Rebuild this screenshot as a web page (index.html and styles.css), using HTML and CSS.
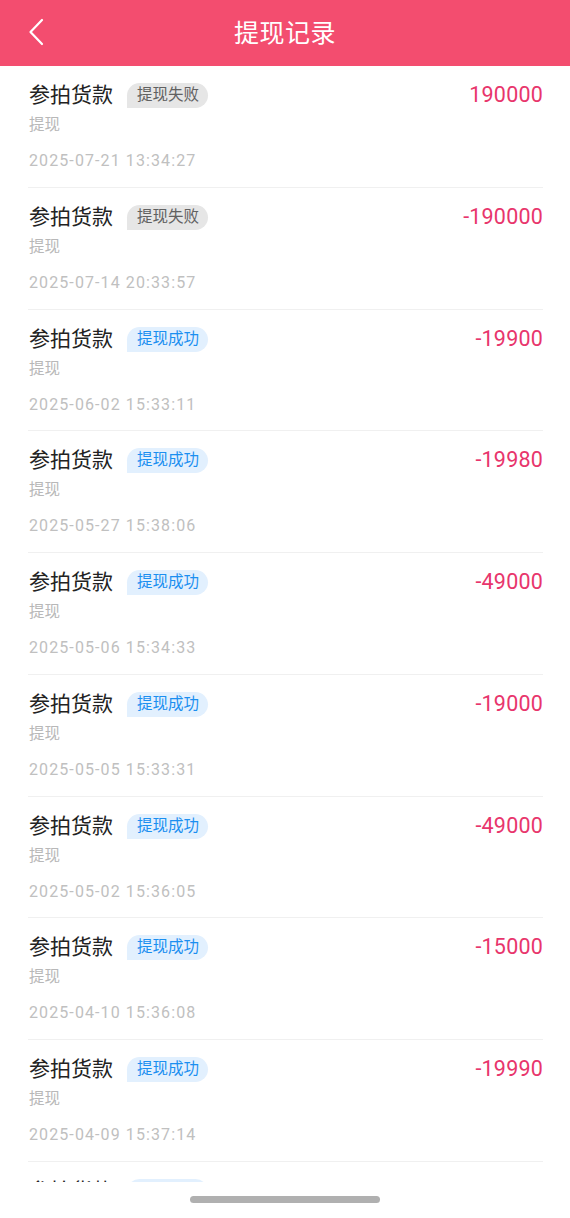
FILE: index.html
```html
<!DOCTYPE html>
<html lang="zh">
<head>
<meta charset="utf-8">
<title>提现记录</title>
<link rel="stylesheet" href="styles.css">
</head>
<body>
<div class="app">
  <header class="topbar">
    <svg class="back" viewBox="0 0 16 28" width="16" height="28"><path d="M14 2 L2.5 14 L14 26" fill="none" stroke="#fff" stroke-width="2.2" stroke-linecap="round" stroke-linejoin="round"/></svg>
    <h1 class="title">提现记录</h1>
  </header>
  <main class="list">
    <div class="row">
      <div class="left">
        <div class="head"><span class="name">参拍货款</span><span class="tag fail">提现失败</span></div>
        <div class="sub">提现</div>
        <div class="date">2025-07-21 13:34:27</div>
      </div>
      <div class="amount">190000</div>
    </div>
    <div class="row">
      <div class="left">
        <div class="head"><span class="name">参拍货款</span><span class="tag fail">提现失败</span></div>
        <div class="sub">提现</div>
        <div class="date">2025-07-14 20:33:57</div>
      </div>
      <div class="amount">-190000</div>
    </div>
    <div class="row">
      <div class="left">
        <div class="head"><span class="name">参拍货款</span><span class="tag ok">提现成功</span></div>
        <div class="sub">提现</div>
        <div class="date">2025-06-02 15:33:11</div>
      </div>
      <div class="amount">-19900</div>
    </div>
    <div class="row">
      <div class="left">
        <div class="head"><span class="name">参拍货款</span><span class="tag ok">提现成功</span></div>
        <div class="sub">提现</div>
        <div class="date">2025-05-27 15:38:06</div>
      </div>
      <div class="amount">-19980</div>
    </div>
    <div class="row">
      <div class="left">
        <div class="head"><span class="name">参拍货款</span><span class="tag ok">提现成功</span></div>
        <div class="sub">提现</div>
        <div class="date">2025-05-06 15:34:33</div>
      </div>
      <div class="amount">-49000</div>
    </div>
    <div class="row">
      <div class="left">
        <div class="head"><span class="name">参拍货款</span><span class="tag ok">提现成功</span></div>
        <div class="sub">提现</div>
        <div class="date">2025-05-05 15:33:31</div>
      </div>
      <div class="amount">-19000</div>
    </div>
    <div class="row">
      <div class="left">
        <div class="head"><span class="name">参拍货款</span><span class="tag ok">提现成功</span></div>
        <div class="sub">提现</div>
        <div class="date">2025-05-02 15:36:05</div>
      </div>
      <div class="amount">-49000</div>
    </div>
    <div class="row">
      <div class="left">
        <div class="head"><span class="name">参拍货款</span><span class="tag ok">提现成功</span></div>
        <div class="sub">提现</div>
        <div class="date">2025-04-10 15:36:08</div>
      </div>
      <div class="amount">-15000</div>
    </div>
    <div class="row">
      <div class="left">
        <div class="head"><span class="name">参拍货款</span><span class="tag ok">提现成功</span></div>
        <div class="sub">提现</div>
        <div class="date">2025-04-09 15:37:14</div>
      </div>
      <div class="amount">-19990</div>
    </div>
    <div class="row">
      <div class="left">
        <div class="head"><span class="name">参拍货款</span><span class="tag ok">提现成功</span></div>
        <div class="sub">提现</div>
        <div class="date">2025-04-08 15:30:12</div>
      </div>
      <div class="amount">-9900</div>
    </div>
  </main>
  <footer class="navbar"><span class="pill"></span></footer>
</div>
</body>
</html>
```
FILE: styles.css
```css
* { box-sizing: border-box; margin: 0; padding: 0; }
html, body { background: #fff; }
body {
  font-family: Roboto, "Noto Sans CJK SC", "Noto Sans", sans-serif;
  width: 570px;
  height: 1218px;
  overflow: hidden;
}
.app { display: flex; flex-direction: column; height: 1218px; }
.topbar {
  height: 66px;
  flex: none;
  background: #f34d6f;
  display: flex;
  align-items: center;
  justify-content: center;
  position: relative;
}
.back { position: absolute; left: 28px; top: 18px; }
.title {
  color: #fff;
  font-size: 25px;
  font-weight: 400;
  letter-spacing: 0.5px;
  margin-top: -4px;
}
.list {
  flex: none;
  height: 1116px;
  overflow: hidden;
  padding: 0 27px 0 28px;
}
.row {
  height: 121.75px;
  border-bottom: 1px solid #f0f0f0;
  display: flex;
  justify-content: space-between;
  align-items: flex-start;
  padding: 17px 0 0 1px;
}
.head { display: flex; align-items: center; height: 25px; }
.name { font-size: 21px; color: #222; line-height: 25px; }
.tag {
  margin-left: 14px;
  height: 25px;
  line-height: 25px;
  padding: 0 9px 0 10px;
  font-size: 15.5px;
  border-radius: 12.5px 12.5px 12.5px 0;
}
.tag.fail { background: #e6e6e6; color: #616161; }
.tag.ok { background: #e2f0fe; color: #1b8ff0; }
.sub {
  margin-top: 7px;
  font-size: 15.5px;
  line-height: 20px;
  color: #b8b8b8;
}
.date {
  margin-top: 16px;
  font-size: 16px;
  line-height: 20px;
  color: #c0c0c0;
  letter-spacing: 1.1px;
}
.amount {
  font-size: 21.5px;
  line-height: 25px;
  color: #e8356c;
  margin-top: -1px;
  letter-spacing: 0.2px;
}
.navbar {
  flex: 1;
  display: flex;
  justify-content: center;
  padding-top: 14px;
  background: #fff;
}
.pill {
  width: 190px;
  height: 7px;
  border-radius: 4px;
  background: #b0b0b0;
}
```
